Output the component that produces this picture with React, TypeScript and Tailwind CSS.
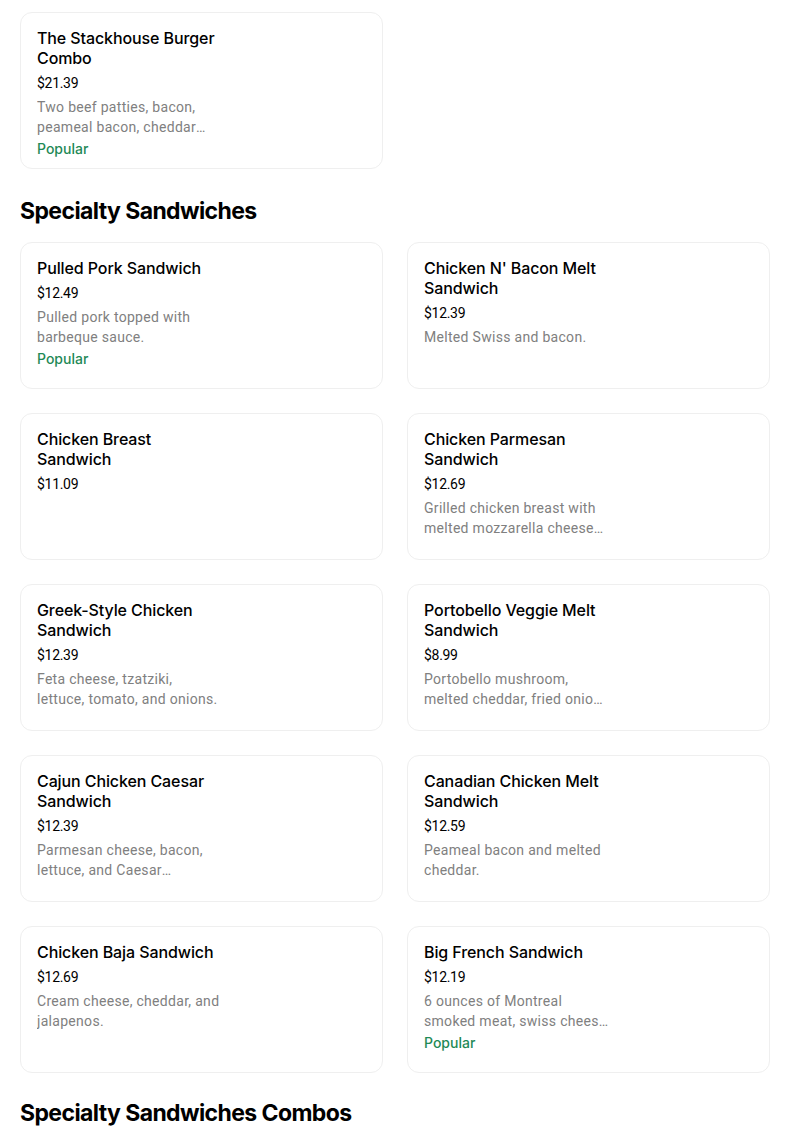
type Item = {
  name: string
  price: string
  desc?: string
  popular?: boolean
}

const combos: Item[] = [
  {
    name: 'The Stackhouse Burger Combo',
    price: '$21.39',
    desc: 'Two beef patties, bacon, peameal bacon, cheddar cheese, lettuce, tomato and onions.',
    popular: true,
  },
]

const sandwiches: Item[] = [
  { name: 'Pulled Pork Sandwich', price: '$12.49', desc: 'Pulled pork topped with barbeque sauce.', popular: true },
  { name: "Chicken N' Bacon Melt Sandwich", price: '$12.39', desc: 'Melted Swiss and bacon.' },
  { name: 'Chicken Breast Sandwich', price: '$11.09' },
  { name: 'Chicken Parmesan Sandwich', price: '$12.69', desc: 'Grilled chicken breast with melted mozzarella cheese and marinara sauce.' },
  { name: 'Greek-Style Chicken Sandwich', price: '$12.39', desc: 'Feta cheese, tzatziki, lettuce, tomato, and onions.' },
  { name: 'Portobello Veggie Melt Sandwich', price: '$8.99', desc: 'Portobello mushroom, melted cheddar, fried onions and roasted peppers.' },
  { name: 'Cajun Chicken Caesar Sandwich', price: '$12.39', desc: 'Parmesan cheese, bacon, lettuce, and Caesar dressing.' },
  { name: 'Canadian Chicken Melt Sandwich', price: '$12.59', desc: 'Peameal bacon and melted cheddar.' },
  { name: 'Chicken Baja Sandwich', price: '$12.69', desc: 'Cream cheese, cheddar, and jalapenos.' },
  { name: 'Big French Sandwich', price: '$12.19', desc: '6 ounces of Montreal smoked meat, swiss cheese and mustard.', popular: true },
]

function MenuCard({ item }: { item: Item }) {
  return (
    <div className="min-h-[147px] rounded-xl border border-[#efefef] bg-white px-4 pt-[15px] pb-[9px]">
      <div className="w-[190px]">
        <p className="text-[16px] font-medium leading-5 tracking-[-0.1px] text-black">{item.name}</p>
        <p className="mt-[5px] font-['Roboto',sans-serif] text-[14px] leading-5 tracking-[-0.3px] text-black">{item.price}</p>
        {item.desc && (
          <p className="mt-1 line-clamp-2 w-[185px] font-['Roboto',sans-serif] text-[14px] leading-5 tracking-[0.3px] text-[#808080]">{item.desc}</p>
        )}
        {item.popular && (
          <p className="mt-[2px] text-[14px] font-medium leading-5 text-[#1f8a57]">Popular</p>
        )}
      </div>
    </div>
  )
}

function Section({ title, items }: { title?: string; items: Item[] }) {
  return (
    <section>
      {title && (
        <h2 className="mt-[26px] mb-[15px] text-[23px] font-bold leading-8 tracking-[-0.6px] text-black">{title}</h2>
      )}
      <div className="grid w-[750px] grid-cols-2 gap-x-6 gap-y-6">
        {items.map((item) => (
          <MenuCard key={item.name} item={item} />
        ))}
      </div>
    </section>
  )
}

export default function App() {
  return (
    <div className="min-h-screen bg-white px-5 pt-3 font-['Inter',sans-serif]">
      <Section items={combos} />
      <Section title="Specialty Sandwiches" items={sandwiches} />
      <h2 className="mt-6 text-[23px] font-bold leading-8 tracking-[-0.6px] text-black">Specialty Sandwiches Combos</h2>
    </div>
  )
}
